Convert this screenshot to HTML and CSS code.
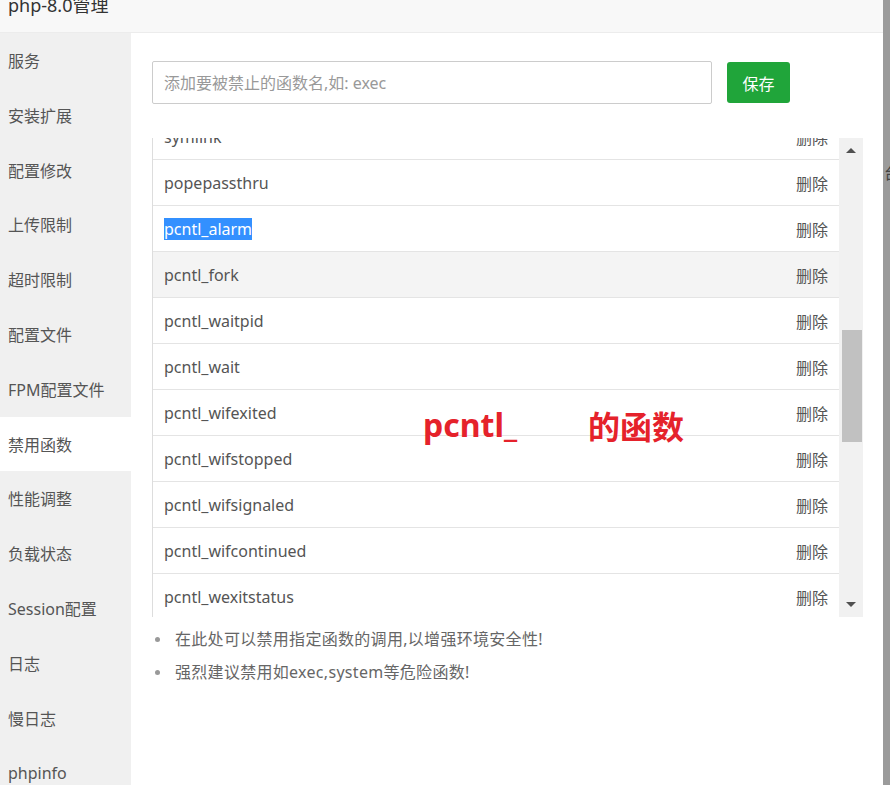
FILE: index.html
```html
<!DOCTYPE html>
<html lang="zh-CN">
<head>
<meta charset="utf-8">
<title>php-8.0管理</title>
<link rel="stylesheet" href="styles.css">
</head>
<body>
<div class="dialog">
  <div class="dialog-header"><span class="title">php-8.0管理</span></div>
  <div class="dialog-body">
    <ul class="sidebar">
      <li>服务</li>
      <li>安装扩展</li>
      <li>配置修改</li>
      <li>上传限制</li>
      <li>超时限制</li>
      <li>配置文件</li>
      <li>FPM配置文件</li>
      <li class="active">禁用函数</li>
      <li>性能调整</li>
      <li>负载状态</li>
      <li>Session配置</li>
      <li>日志</li>
      <li>慢日志</li>
      <li>phpinfo</li>
    </ul>
    <div class="main">
      <div class="form-row">
        <input class="fn-input" type="text" placeholder="添加要被禁止的函数名,如: exec">
        <button class="btn-save">保存</button>
      </div>
      <div class="table-box">
        <div class="table-view">
          <div class="table-rows">
            <div class="row"><span class="name">symlink</span><span class="del">删除</span></div>
            <div class="row"><span class="name">popepassthru</span><span class="del">删除</span></div>
            <div class="row"><span class="name"><span class="sel">pcntl_alarm</span></span><span class="del">删除</span></div>
            <div class="row hover"><span class="name">pcntl_fork</span><span class="del">删除</span></div>
            <div class="row"><span class="name">pcntl_waitpid</span><span class="del">删除</span></div>
            <div class="row"><span class="name">pcntl_wait</span><span class="del">删除</span></div>
            <div class="row"><span class="name">pcntl_wifexited</span><span class="del">删除</span></div>
            <div class="row"><span class="name">pcntl_wifstopped</span><span class="del">删除</span></div>
            <div class="row"><span class="name">pcntl_wifsignaled</span><span class="del">删除</span></div>
            <div class="row"><span class="name">pcntl_wifcontinued</span><span class="del">删除</span></div>
            <div class="row"><span class="name">pcntl_wexitstatus</span><span class="del">删除</span></div>
            <div class="row"><span class="name">pcntl_wtermsig</span><span class="del">删除</span></div>
          </div>
        </div>
        <div class="scrollbar">
          <span class="arrow up"></span>
          <span class="thumb"></span>
          <span class="arrow down"></span>
        </div>
      </div>
      <ul class="notes">
        <li>在此处可以禁用指定函数的调用,以增强环境安全性!</li>
        <li>强烈建议禁用如exec,system等危险函数!</li>
      </ul>
      <span class="mark mark-a">pcntl_</span>
      <span class="mark mark-b">的函数</span>
    </div>
  </div>
</div>
<div class="backdrop"><span class="bg-char">台</span></div>
</body>
</html>
```

FILE: styles.css
```css
* { box-sizing: border-box; }

html, body {
  margin: 0;
  padding: 0;
}

body {
  width: 890px;
  height: 785px;
  overflow: hidden;
  display: flex;
  font-family: "Noto Sans", "Noto Sans CJK SC", sans-serif;
  color: #555;
}

.dialog {
  width: 883px;
  height: 785px;
  background: #fff;
  display: flex;
  flex-direction: column;
}

.dialog-header {
  height: 33px;
  flex: none;
  background: #f8f8f8;
  border-bottom: 1px solid #ececec;
  padding-left: 8px;
  overflow: hidden;
}

.title {
  display: block;
  font-size: 18px;
  line-height: 18px;
  margin-top: -4px;
  color: #333;
}

.dialog-body {
  flex: 1;
  display: flex;
  min-height: 0;
}

.sidebar {
  list-style: none;
  margin: 0;
  padding: 0;
  width: 131px;
  flex: none;
  background: #f0f0f0;
  overflow: hidden;
}

.sidebar li {
  height: 54.8px;
  line-height: 56px;
  padding-left: 8px;
  font-size: 16px;
  color: #555;
  white-space: nowrap;
}

.sidebar li.active {
  background: #fff;
}

.main {
  flex: 1;
  position: relative;
  padding: 28px 0 0 21px;
}

.form-row {
  display: flex;
  align-items: flex-start;
}

.fn-input {
  width: 560px;
  height: 43px;
  border: 1px solid #ccc;
  border-radius: 2px;
  padding: 0 11px;
  font-family: inherit;
  font-size: 16px;
  color: #555;
  outline: none;
}

.fn-input::placeholder {
  color: #999;
}

.btn-save {
  margin: 1px 0 0 15px;
  width: 63px;
  height: 41px;
  border: none;
  border-radius: 3px;
  background: #20a53a;
  color: #fff;
  font-family: inherit;
  font-size: 16px;
  padding: 0;
}

.table-box {
  margin-top: 34px;
  width: 711px;
  height: 479px;
  display: flex;
}

.table-view {
  flex: 1;
  overflow: hidden;
  border-left: 1px solid #ddd;
}

.table-rows {
  margin-top: -24px;
}

.row {
  height: 46px;
  border-bottom: 1px solid #e4e4e4;
  display: flex;
  align-items: center;
  justify-content: space-between;
  padding: 0 11px 0 11px;
  font-size: 16px;
  color: #555;
}

.row.hover {
  background: #f4f4f4;
}

.sel {
  background: #3390ff;
  color: #fff;
}

.scrollbar {
  width: 24px;
  flex: none;
  background: #f1f1f1;
  display: flex;
  flex-direction: column;
  align-items: center;
}

.arrow {
  width: 0;
  height: 0;
  border-left: 5px solid transparent;
  border-right: 5px solid transparent;
}

.arrow.up {
  margin-top: 10px;
  border-bottom: 5px solid #505050;
}

.arrow.down {
  margin-top: auto;
  margin-bottom: 10px;
  border-top: 5px solid #505050;
}

.thumb {
  width: 20px;
  height: 112px;
  margin: 177px 0 0 2px;
  background: #c1c1c1;
}

.notes {
  margin: 11px 0 0 0;
  padding: 0 0 0 23px;
  list-style: none;
  font-size: 16px;
  color: #666;
}

.notes li {
  position: relative;
  height: 33px;
  line-height: 22px;
  letter-spacing: 0.3px;
}

.notes li::before {
  content: "";
  position: absolute;
  left: -20px;
  top: 9px;
  width: 5px;
  height: 5px;
  border-radius: 50%;
  background: #999;
}

.mark {
  position: absolute;
  top: 372px;
  font-family: "Noto Sans CJK SC", "Noto Sans", sans-serif;
  font-size: 32px;
  font-weight: 700;
  line-height: 40px;
  color: #e5222b;
}

.mark-a {
  left: 292px;
  font-family: "Noto Sans", "Noto Sans CJK SC", sans-serif;
}

.mark-b {
  left: 457px;
}

.backdrop {
  flex: 1;
  background: #9b9b9b;
  position: relative;
  overflow: hidden;
}

.bg-char {
  position: absolute;
  left: 1px;
  top: 160px;
  font-size: 16px;
  color: #444;
}
```
